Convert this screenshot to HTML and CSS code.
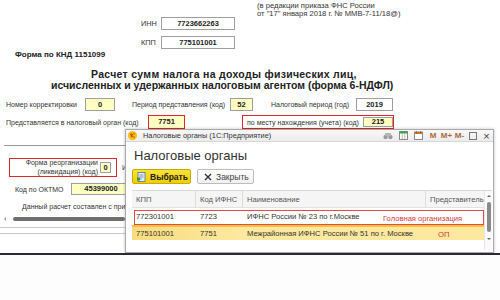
FILE: index.html
```html
<!DOCTYPE html>
<html lang="ru">
<head>
  <meta http-equiv="Content-Type" content="text/html;charset=UTF-8">
  <link rel="stylesheet" href="styles.css">
</head>
<body>
  <div class="screen">
    <div class="doc">
      <div class="head">
        <div class="ids">
          <div class="id-label">ИНН</div>
          <div class="field id-field">7723662263</div>
          <div class="id-label">КПП</div>
          <div class="field id-field">775101001</div>
        </div>
        <div class="note">(в редакции приказа ФНС России<br>от "17" января 2018 г. № ММВ-7-11/18@)</div>
      </div>

      <div class="knd">Форма по КНД 1151099</div>

      <div class="title">
        <div class="title-line1">Расчет сумм налога на доходы физических лиц,</div>
        <div class="title-line2">исчисленных и удержанных налоговым агентом (форма 6-НДФЛ)</div>
      </div>

      <div class="row row-1">
        <div class="lbl lbl-corr">Номер корректировки</div>
        <div class="field yellow f-corr">0</div>
        <div class="lbl lbl-period">Период представления (код)</div>
        <div class="field yellow f-period">52</div>
        <div class="lbl lbl-year">Налоговый период (год)</div>
        <div class="field f-year">2019</div>
      </div>

      <div class="row row-2">
        <div class="lbl lbl-organ">Представляется в налоговый орган (код)</div>
        <div class="field yellow red f-organ">7751</div>
        <div class="red-box place">
          <div class="lbl lbl-place">по месту нахождения (учета) (код)</div>
          <div class="field yellow f-place">215</div>
        </div>
      </div>

      <div class="sep"></div>

      <div class="row row-3">
        <div class="red-box reorg">
          <div class="lbl lbl-reorg">Форма реорганизации<br>(ликвидация) (код)</div>
          <div class="field yellow f-reorg">0</div>
        </div>
        <div class="lbl lbl-inn">И</div>
      </div>

      <div class="row row-4">
        <div class="lbl lbl-oktmo">Код по ОКТМО</div>
        <div class="field yellow f-oktmo">45399000</div>
      </div>

      <div class="lbl made">Данный расчет составлен с при</div>

      <div class="hscroll">
        <div class="hscroll-arrow"></div>
        <div class="hscroll-thumb"></div>
      </div>
      <div class="panel-line"></div>
      <div class="panel-line"></div>
    </div>

    <div class="dlg">
      <div class="dlg-title">
        <svg class="logo" width="9" height="9" viewBox="0 0 9 9">
          <circle cx="4.5" cy="4.5" r="4.3" fill="#f6c700" stroke="#d9a400" stroke-width="0.4"/>
          <path d="M2.2 3.4 L3.3 2.6 V6.4" fill="none" stroke="#d0211a" stroke-width="0.9"/>
          <path d="M6.8 3.1 A1.7 1.7 0 1 0 6.8 5.9" fill="none" stroke="#d0211a" stroke-width="0.9"/>
        </svg>
        <span class="dlg-caption">Налоговые органы (1С:Предприятие)</span>
        <div class="dlg-icons">
          <span class="ti ti-16">
            <svg width="10" height="8" viewBox="0 0 10 8">
              <circle cx="2.6" cy="5" r="2.2" fill="#9a9a9a"/>
              <circle cx="7.4" cy="5" r="2.2" fill="#9a9a9a"/>
              <rect x="2" y="1" width="6" height="3" fill="#b5b5b5"/>
            </svg>
          </span>
          <span class="ti ti-15">
            <svg width="9" height="9" viewBox="0 0 9 9">
              <rect x="0.5" y="0.5" width="8" height="8" fill="#fff" stroke="#8a8a8a"/>
              <rect x="0.5" y="0.5" width="8" height="2" fill="#3aa34a"/>
              <path d="M3.2 2.5 V8.5 M5.8 2.5 V8.5" stroke="#8a8a8a" stroke-width="0.6"/>
            </svg>
          </span>
          <span class="ti ti-15">
            <svg width="9" height="9" viewBox="0 0 9 9">
              <rect x="0.5" y="1" width="8" height="7.5" fill="#fff" stroke="#8a8a8a"/>
              <rect x="0.5" y="1" width="8" height="2" fill="#c8742f"/>
              <path d="M2.5 0.3 V2 M6.5 0.3 V2" stroke="#555" stroke-width="0.7"/>
            </svg>
          </span>
          <span class="ti ti-14 mbtn">M</span>
          <span class="ti ti-13 mbtn">M+</span>
          <span class="ti ti-13 mbtn">M-</span>
          <span class="ti ti-14"><span class="winmax"></span></span>
          <span class="ti ti-13 winclose">×</span>
        </div>
      </div>

      <div class="dlg-body">
        <div class="dlg-heading">Налоговые органы</div>

        <div class="dlg-tools">
          <div class="btn btn-main">
            <svg width="9" height="10" viewBox="0 0 9 10">
              <rect x="1" y="0.5" width="7" height="9" fill="#e8eef7" stroke="#4f6f9f" stroke-width="0.8"/>
              <path d="M2.5 3 H6.5 M2.5 5 H6.5 M2.5 7 H5" stroke="#4f6f9f" stroke-width="0.7"/>
              <rect x="0" y="5.5" width="3" height="3" fill="#3a9b3a"/>
            </svg>
            <span>Выбрать</span>
          </div>
          <div class="btn btn-close">
            <svg width="8" height="8" viewBox="0 0 8 8">
              <path d="M1 1 L7 7 M7 1 L1 7" stroke="#333" stroke-width="1.4"/>
            </svg>
            <span>Закрыть</span>
          </div>
        </div>

        <div class="grid">
          <div class="grid-rows">
            <div class="grow grow-head">
              <div class="cell">КПП</div>
              <div class="cell">Код ИФНС</div>
              <div class="cell">Наименование</div>
              <div class="cell">Представитель</div>
            </div>
            <div class="grow grow-main">
              <div class="cell">772301001</div>
              <div class="cell">7723</div>
              <div class="cell">ИФНС России № 23 по г.Москве</div>
              <div class="cell"></div>
              <span class="mark mark-main">Головная организация</span>
            </div>
            <div class="grow grow-sel">
              <div class="cell">775101001</div>
              <div class="cell">7751</div>
              <div class="cell">Межрайонная ИФНС России № 51 по г. Москве</div>
              <div class="cell"></div>
              <span class="mark mark-op">ОП</span>
            </div>
          </div>
          <div class="vscroll">
            <span class="vs-up"></span>
            <span class="vs-thumb"></span>
            <span class="vs-down"></span>
          </div>
        </div>
      </div>
    </div>
  </div>
</body>
</html>
```

FILE: styles.css
```css
* {
  margin: 0;
  padding: 0;
  box-sizing: border-box;
}

html, body {
  width: 500px;
  height: 300px;
  overflow: hidden;
  background: #fdfdfd;
  font-family: 'Liberation Sans', Arial, sans-serif;
  color: #222;
}

.screen {
  position: relative;
  height: 255px;
  background: #fff;
  border-bottom: 2px solid #2e2734;
  overflow: hidden;
}

/* background form */

.doc {
  display: flow-root;
  height: 253px;
  font-size: 7px;
}

.head {
  display: flex;
}

.ids {
  margin-left: 141px;
  padding-top: 17px;
  display: grid;
  grid-template-columns: 20px 74px;
  row-gap: 6px;
  align-items: center;
}

.id-label {
  color: #333;
  font-size: 7.3px;
}

.field {
  height: 13px;
  border: 1px solid #9f9f9f;
  background: #fff;
  text-align: center;
  font-weight: 700;
  font-size: 7.5px;
  line-height: 11px;
  color: #222;
}

.field.yellow {
  background: #ffffc4;
}

.field.red {
  border-color: #e0262a;
}

.note {
  margin-left: 22px;
  padding-top: 2px;
  font-size: 7.6px;
  line-height: 8px;
  color: #333;
  white-space: nowrap;
}

.knd {
  margin: 1px 0 0 15px;
  font-weight: 700;
  font-size: 8px;
  line-height: 10px;
}

.title {
  margin-top: 9px;
  font-weight: 700;
  font-size: 10.5px;
  line-height: 11px;
  white-space: nowrap;
}

.title-line1 {
  padding-left: 91px;
  letter-spacing: 0.3px;
}

.title-line2 {
  padding-left: 51px;
}

.row {
  display: flex;
  align-items: center;
}

.lbl {
  color: #333;
  font-size: 7px;
  white-space: nowrap;
}

.row-1 {
  margin-top: 7px;
  height: 13px;
}

.lbl-corr { margin-left: 6px; width: 79px; }
.f-corr { width: 30px; }
.lbl-period { margin-left: 17px; width: 98px; }
.f-period { width: 23px; }
.lbl-year { margin-left: 18px; width: 85px; }
.f-year { width: 37px; }

.row-2 {
  margin-top: 4px;
  height: 14px;
}

.lbl-organ { margin-left: 6px; width: 142px; }
.f-organ { width: 37px; height: 14px; line-height: 12px; }

.red-box {
  border: 1px solid #e0262a;
  display: flex;
  align-items: center;
}

.place {
  margin-left: 57px;
  width: 152px;
  height: 14px;
}

.lbl-place { margin-left: 4px; width: 116px; }
.f-place { width: 30px; height: 10px; line-height: 8px; }

.sep {
  margin: 16px 0 0 4px;
  width: 125px;
  height: 1px;
  background: #9a9a9a;
}

.row-3 {
  margin-top: 12px;
  height: 19px;
}

.reorg {
  margin-left: 9px;
  width: 108px;
  height: 19px;
}

.lbl-reorg {
  width: 88px;
  text-align: right;
  line-height: 8.5px;
}

.f-reorg {
  margin-left: 2px;
  width: 11px;
  height: 11px;
  line-height: 9px;
}

.lbl-inn { margin-left: 5px; }

.row-4 {
  margin-top: 6px;
  height: 12px;
}

.lbl-oktmo { margin-left: 15px; width: 56px; }
.f-oktmo { width: 60px; height: 12px; line-height: 10px; }

.made {
  margin: 7px 0 0 22px;
  line-height: 10px;
}

.hscroll {
  display: flex;
  align-items: center;
  margin-top: 4px;
  width: 125px;
  height: 6px;
}

.hscroll-arrow {
  flex: none;
  margin-left: 4px;
  width: 0;
  height: 0;
  border-top: 2px solid transparent;
  border-bottom: 2px solid transparent;
  border-right: 2px solid #999;
}

.hscroll-thumb {
  flex: none;
  margin-left: 7px;
  width: 112px;
  height: 4px;
  border-radius: 2px;
  background: #6f6f6f;
}

.panel-line {
  margin-top: 5px;
  width: 125px;
  height: 1px;
  background: #c8c8c8;
}

/* dialog window */

.dlg {
  position: absolute;
  left: 125px;
  top: 129px;
  width: 369px;
  height: 124px;
  background: #fff;
  border: 1px solid #a9a9a9;
  box-shadow: 0 0 3px rgba(0, 0, 0, 0.25);
}

.dlg-title {
  display: flex;
  align-items: center;
  height: 12px;
  padding-left: 2px;
  background: linear-gradient(#f8f8f8, #ececec);
  border-bottom: 1px solid #d6d6d6;
}

.logo {
  flex: none;
}

.dlg-caption {
  margin-left: 6px;
  font-size: 7.4px;
  color: #333;
  white-space: nowrap;
}

.dlg-icons {
  margin-left: auto;
  display: flex;
  align-items: center;
}

.ti {
  display: flex;
  justify-content: center;
  align-items: center;
  height: 11px;
}

.ti-16 { width: 16px; }
.ti-15 { width: 15px; }
.ti-14 { width: 14px; }
.ti-13 { width: 13px; }

.mbtn {
  font-size: 8px;
  font-weight: 700;
  color: #a86a3c;
}

.winmax {
  width: 8px;
  height: 8px;
  border: 1px solid #777;
}

.winclose {
  font-size: 11px;
  line-height: 10px;
  color: #444;
}

.dlg-body {
  padding-left: 6px;
}

.dlg-heading {
  margin: 7px 0 0 2px;
  font-size: 13px;
  line-height: 14px;
  color: #333;
}

.dlg-tools {
  display: flex;
  gap: 6px;
  margin-top: 6px;
}

.btn {
  display: flex;
  align-items: center;
  gap: 4px;
  height: 15px;
  padding-left: 4px;
  border-radius: 2px;
  font-size: 8.5px;
}

.btn-main {
  width: 59px;
  background: linear-gradient(#fbe33a, #f0cf00);
  border: 1px solid #c9ab00;
  font-weight: 700;
  color: #222;
}

.btn-close {
  width: 57px;
  padding-left: 6px;
  background: linear-gradient(#ffffff, #f0f0f0);
  border: 1px solid #bdbdbd;
  color: #444;
}

.grid {
  display: flex;
  margin-top: 6px;
  margin-right: 1px;
  height: 60px;
  border-top: 1px solid #d8d8d8;
}

.grid-rows {
  flex: 1;
  min-width: 0;
}

.grow {
  position: relative;
  display: grid;
  grid-template-columns: 64px 47px 183px 1fr;
  align-items: center;
  font-size: 7.6px;
  color: #333;
  white-space: nowrap;
  overflow: hidden;
}

.cell {
  padding-left: 4px;
  overflow: hidden;
}

.grow-head {
  height: 17px;
  background: #f5f5f5;
  border-bottom: 1px solid #e2e2e2;
  color: #555;
}

.grow-head .cell {
  height: 17px;
  line-height: 17px;
  border-right: 1px solid #dcdcdc;
}

.grow-head .cell:last-child {
  border-right: none;
}

.grow-main {
  height: 17px;
}

.grow-main::after {
  content: '';
  position: absolute;
  left: 2px;
  top: 2px;
  right: 0;
  bottom: 0;
  border: 1px solid #e8474a;
}

.grow-sel {
  height: 15px;
  background: linear-gradient(90deg, #f9dc7f, #fce89e 30%, #fce89e);
  border-top: 2px solid #f3c23c;
}

.mark {
  position: absolute;
  font-size: 7.6px;
  color: #d4363a;
}

.mark-main {
  left: 251px;
  top: 6px;
}

.mark-op {
  left: 306px;
  top: 3px;
}

.vscroll {
  width: 8px;
  display: flex;
  flex-direction: column;
  align-items: center;
  padding-top: 4px;
  background: #fafafa;
  border-left: 1px solid #e6e6e6;
}

.vs-up,
.vs-down {
  width: 0;
  height: 0;
  border-left: 2px solid transparent;
  border-right: 2px solid transparent;
}

.vs-up {
  border-bottom: 2px solid #666;
}

.vs-down {
  border-top: 2px solid #666;
}

.vs-thumb {
  width: 4px;
  height: 30px;
  margin: 5px 0 6px;
  border-radius: 2px;
  background: #8a8a8a;
}
```
